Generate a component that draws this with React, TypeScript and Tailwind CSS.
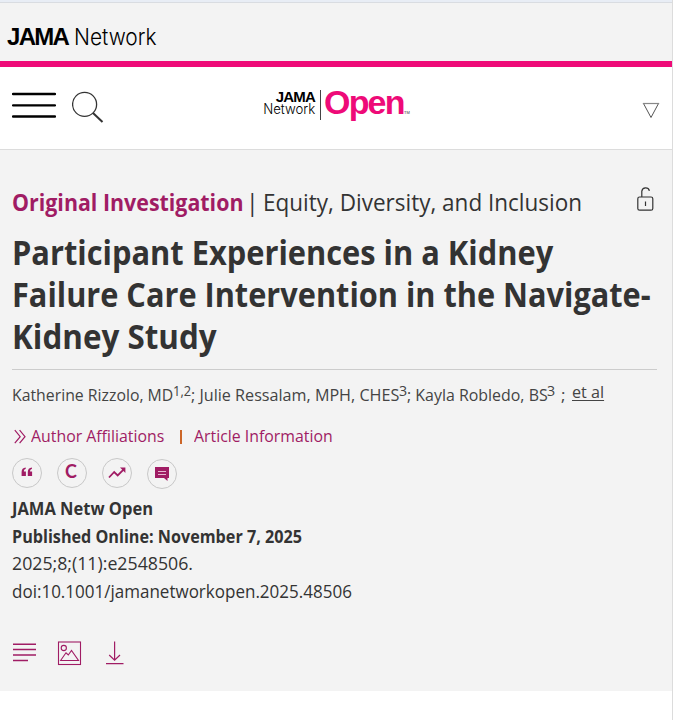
import React from 'react';

interface ToolButtonProps {
  label: string;
  className?: string;
  children: React.ReactNode;
}

function ToolButton({ label, className = '', children }: ToolButtonProps) {
  return (
    <button
      aria-label={label}
      className={`flex h-[30px] w-[30px] items-center justify-center rounded-full border border-[#c8c8c8] text-[#a01c64] ${className}`}
    >
      {children}
    </button>
  );
}

function NetworkBar() {
  return (
    <div className="h-[67px] border-b-[6px] border-[#ee0a78] bg-[#f3f3f3]">
      <div className="h-[3px] border-b border-[#d9dce1] bg-[#e8edf5]" />
      <a className="flex gap-[5px] pt-[20px] pl-[7px] font-['Liberation_Sans',sans-serif] text-[24px] leading-[28px] text-black">
        <span className="w-[62px] font-bold tracking-[-1.7px]">JAMA</span>
        <span className="origin-left scale-x-[0.91] font-['Inter',sans-serif] text-[23px] font-light">Network</span>
      </a>
    </div>
  );
}

function NavBar() {
  return (
    <header className="flex h-[83px] items-start justify-between border-b border-[#dcdcdc] bg-white pr-[12px] pl-3">
      <div className="flex w-[251px] gap-4 pt-[24px]">
        <svg width="44" height="30" viewBox="0 0 44 30" stroke="#000" strokeWidth="2.3" strokeLinecap="round">
          <path d="M1 3h42M1 14.4h42M1 25.5h42" />
        </svg>
        <svg width="32" height="32" viewBox="0 0 32 32" fill="none" stroke="#333" strokeLinecap="butt">
          <circle cx="12.6" cy="13.4" r="12" strokeWidth="1.3" />
          <path d="M21 22l9.5 9" strokeWidth="2" />
        </svg>
      </div>
      <a className="flex flex-1 pt-[23px] font-['Liberation_Sans',sans-serif] text-black">
        <span className="flex w-[52px] flex-col items-end text-[15px] leading-[13px]">
          <span className="font-bold tracking-[-0.8px]">JAMA</span>
          <span className="origin-right scale-x-[0.91] font-['Inter',sans-serif] text-[14.5px] leading-[12px] font-light">Network</span>
        </span>
        <span className="ml-[5px] h-[30px] w-px bg-[#444]" />
        <span className="ml-[3px] w-[80px] text-[34px] leading-[25px] font-bold tracking-[-1.8px] text-[#ee0a78]">Open</span>
        <span className="pt-[20px] text-[4px] leading-[5px] text-[#333]">TM</span>
      </a>
      <svg className="mt-[35px]" width="18" height="18" viewBox="0 0 18 18" fill="none">
        <path d="M1.5 1.5L9 15.5L16.5 1.5" stroke="#555" strokeWidth="1" />
        <path d="M0.8 1.5H17.2" stroke="#888" strokeWidth="1.2" />
      </svg>
    </header>
  );
}

function ArticleHeader() {
  return (
    <section>
      <div className="flex justify-between pr-[3px]">
        <p className="flex text-[23px] leading-8 whitespace-nowrap text-[#333]">
          <b className="w-[234px] origin-left scale-x-[0.93] font-bold text-[#a01c64]">
            Original Investigation
          </b>
          <span className="w-[17px]">|</span>
          <span className="origin-left scale-x-[0.978]">Equity, Diversity, and Inclusion</span>
        </p>
        <svg width="17" height="26" viewBox="0 0 17 26" fill="none" stroke="#333" strokeWidth="1.2">
          <rect x="0.8" y="11" width="15" height="13.2" rx="1.8" />
          <path d="M4.8 11V5.2a3.9 3.9 0 0 1 7.6-.4" />
          <path d="M8.5 15.5v4.5" />
        </svg>
      </div>
      <h1 className="mt-[13px] border-b border-[#ccc] pb-3 text-[34px] leading-[42px] font-bold whitespace-nowrap text-[#333]">
        <span className="block w-max origin-left scale-x-[0.906]">Participant Experiences in a Kidney</span>
        <span className="block w-max origin-left scale-x-[0.903]">Failure Care Intervention in the Navigate-</span>
        <span className="block w-max origin-left scale-x-[0.923]">Kidney Study</span>
      </h1>
    </section>
  );
}

function Authors() {
  return (
    <p className="mt-[13px] flex h-6 text-[17px] leading-6 whitespace-nowrap text-[#444]">
      <span className="w-[161px] origin-left scale-x-[0.93]">Katherine Rizzolo, MD</span>
      <span className="-mt-[5px] w-[18px] origin-left scale-x-[0.86] text-[15px]">1,2</span>
      <span className="w-[208px] origin-left scale-x-[0.95]">; Julie Ressalam, MPH, CHES</span>
      <span className="-mt-[5px] w-[8px] origin-left scale-x-[0.95] text-[15px]">3</span>
      <span className="w-[140px] origin-left scale-x-[0.937]">; Kayla Robledo, BS</span>
      <span className="-mt-[5px] w-[14px] origin-left scale-x-[0.95] text-[15px]">3</span>
      <span className="w-[11px]">;</span>
      <a className="-mt-[3px] origin-left scale-x-[0.95] underline decoration-1 underline-offset-[2px]">et al</a>
    </p>
  );
}

function ArticleLinks() {
  return (
    <div className="mt-[17px] flex text-[17px] leading-6 whitespace-nowrap text-[#a01c64]">
      <svg className="mt-[5px] mr-[4px] ml-[2px]" width="13" height="16" viewBox="0 0 13 16" fill="none" stroke="currentColor" strokeWidth="1.2">
        <path d="M0.8 1.2l5.4 6.5-5.4 6.5M5.6 1.2L11 7.7l-5.4 6.5" />
      </svg>
      <a className="w-[149px] origin-left scale-x-[0.933]">Author Affiliations</a>
      <span className="mt-[6px] mr-[12px] h-[14px] w-[2px] bg-[#cc6628]" />
      <a className="origin-left scale-x-[0.933]">Article Information</a>
    </div>
  );
}

function ArticleTools() {
  return (
    <div className="mt-[10px] flex gap-[15px]">
      <ToolButton label="Cite">
        <svg className="-mt-[3px]" width="12" height="10" viewBox="0 0 12 10" fill="currentColor">
          <path d="M4.7.6v1.5C3.5 2.4 2.9 3.2 2.9 4.4h2V9H.6V5C.6 2.4 2.1.8 4.7.6zM10.9.6v1.5C9.7 2.4 9.1 3.2 9.1 4.4h2V9H6.8V5C6.8 2.4 8.3.8 10.9.6z" />
        </svg>
      </ToolButton>
      <ToolButton label="Permissions">
        <span className="-mt-[4px] -ml-[2px] font-['Lato',sans-serif] text-[18px] leading-[20px] font-bold">C</span>
      </ToolButton>
      <ToolButton label="Metrics">
        <svg width="18" height="12" viewBox="0 0 18 12" fill="none" stroke="currentColor" strokeWidth="1.8">
          <path d="M1 10.5L6.2 5l3.5 3.4L15.5 2.6" />
          <path d="M12 .6h5.4V6z" fill="currentColor" stroke="none" />
        </svg>
      </ToolButton>
      <ToolButton label="Comments" className="mt-px">
        <svg width="14" height="14" viewBox="0 0 14 14" fill="currentColor">
          <path d="M0 0h14v11h-1.5v3L9 11H0z" />
          <path d="M3 4.5h8M3 7.5h8" stroke="#e6b6d0" strokeWidth="1" />
        </svg>
      </ToolButton>
    </div>
  );
}

function Citation() {
  return (
    <div className="mt-[6px] text-[18px] leading-[27.6px] whitespace-nowrap text-[#333]">
      <p className="w-max origin-left scale-x-[0.917] font-bold">JAMA Netw Open</p>
      <p className="w-max origin-left scale-x-[0.898] font-bold">Published Online: November 7, 2025</p>
      <p className="w-max origin-left scale-x-[0.985]">2025;8;(11):e2548506.</p>
      <p className="w-max origin-left scale-x-[0.945]">doi:10.1001/jamanetworkopen.2025.48506</p>
    </div>
  );
}

function ViewOptions() {
  return (
    <div className="mt-[36px] flex text-[#a01c64]">
      <svg width="25" height="25" viewBox="0 0 25 25" stroke="currentColor" strokeWidth="1.5">
        <path d="M1 3.2h23M1 8.6h23M1 14h23M1 19.5h15" />
      </svg>
      <svg className="ml-[20px]" width="25" height="25" viewBox="0 0 25 25" fill="none" stroke="currentColor" strokeWidth="1.1">
        <rect x="1.5" y="1" width="22" height="22.5" />
        <circle cx="6.8" cy="7" r="2.6" />
        <path d="M3.6 19.5L9 11.8l2.3 2.2 3.2-4.5 7 10z" />
      </svg>
      <svg className="ml-[23px]" width="20" height="25" viewBox="0 0 20 25" fill="none" stroke="currentColor" strokeWidth="1.2">
        <path d="M9.6 .5v18.5M4.2 14l5.4 5.2L15 14M1 22.7h17.5" />
      </svg>
    </div>
  );
}

export default function App() {
  return (
    <div className="h-[720px] w-[673px] overflow-hidden border-r border-[#dcdcdc] bg-white font-['Open_Sans',sans-serif]">
      <NetworkBar />
      <NavBar />
      <main className="h-[541px] bg-[#f3f3f3] pt-9 pr-[15px] pl-3">
        <ArticleHeader />
        <Authors />
        <ArticleLinks />
        <ArticleTools />
        <Citation />
        <ViewOptions />
      </main>
    </div>
  );
}
